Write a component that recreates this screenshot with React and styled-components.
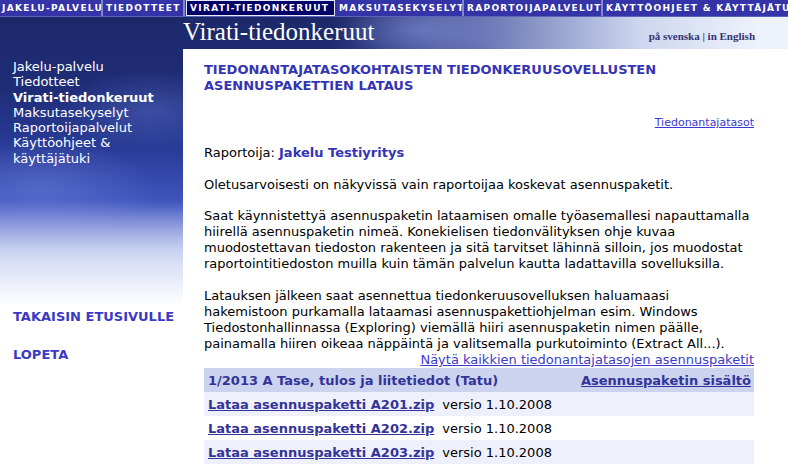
import styled, { createGlobalStyle } from "styled-components";

const GlobalStyle = createGlobalStyle`
  html, body {
    margin: 0;
    padding: 0;
    background: #fff;
  }
  body {
    font-family: "DejaVu Sans", Verdana, sans-serif;
    font-size: 13px;
    color: #000;
  }
`;

const Page = styled.div`
  width: 788px;
  height: 474px;
  overflow: hidden;
  display: flex;
  flex-direction: column;
  background:
    linear-gradient(to bottom, rgba(255,255,255,0) 0, rgba(255,255,255,0) 200px, rgba(235,240,252,0.7) 250px, #fff 305px),
    linear-gradient(to right, rgba(230,236,250,0) 0, rgba(230,236,250,0) 330px, rgba(150,165,225,0.6) 480px, rgba(215,224,246,0.95) 640px, #eef2fb 760px),
    radial-gradient(ellipse 90px 40px at 150px 110px, rgba(90,110,200,0.45), rgba(90,110,200,0) 100%),
    radial-gradient(ellipse 120px 50px at 40px 190px, rgba(110,130,220,0.5), rgba(110,130,220,0) 100%),
    radial-gradient(ellipse 80px 30px at 420px 30px, rgba(120,140,220,0.5), rgba(120,140,220,0) 100%),
    linear-gradient(to bottom, #1b2766 0, #1f2d78 90px, #2a3c98 150px, #4358c2 210px, #8294dc 260px);
`;

const NavBar = styled.nav`
  display: flex;
  height: 16px;
  background: #3434a8;
  border-bottom: 1px solid #5a64b8;
`;

const NavItem = styled.a`
  flex: 0 0 ${(p) => p.$w}px;
  box-sizing: border-box;
  display: flex;
  align-items: center;
  padding-left: ${(p) => (p.$active ? 3 : 2)}px;
  font-family: "DejaVu Sans", Verdana, sans-serif;
  font-weight: bold;
  font-size: 9px;
  letter-spacing: 1.3px;
  color: #fff;
  white-space: nowrap;
  overflow: hidden;
  text-decoration: none;
  background: ${(p) => (p.$active ? "#000066" : "transparent")};
  border: ${(p) => (p.$active ? "1px solid #e8e8ff" : "none")};
  border-right: ${(p) => (p.$active ? "1px solid #e8e8ff" : "2px solid #7f88d6")};
  margin-right: ${(p) => (p.$active ? 2 : 1)}px;
`;

const Banner = styled.header`
  height: 32px;
  display: flex;
  align-items: flex-end;
`;

const BannerTitle = styled.h1`
  margin: 0 0 3px 183px;
  font-family: "Liberation Serif", "Times New Roman", serif;
  font-weight: normal;
  font-size: 25px;
  line-height: 28px;
  color: #fff;
`;

const LangLinks = styled.div`
  margin: 0 33px 7px auto;
  font-family: "Liberation Serif", "Times New Roman", serif;
  font-weight: bold;
  font-size: 11px;
  color: #333370;

  a {
    color: #333370;
    text-decoration: none;
  }
`;

const Body = styled.div`
  flex: 1;
  display: flex;
`;

const Sidebar = styled.aside`
  flex: 0 0 183px;
  box-sizing: border-box;
  padding: 10px 0 0 13px;
`;

const MenuList = styled.ul`
  list-style: none;
  margin: 0;
  padding: 0;
  width: 150px;
`;

const MenuItem = styled.li`
  font-size: 13px;
  line-height: 15.3px;
  color: #fff;
  font-weight: ${(p) => (p.$current ? "bold" : "normal")};
`;

const SideLink = styled.a`
  display: block;
  margin-top: ${(p) => p.$top}px;
  font-weight: bold;
  font-size: 13px;
  line-height: 16px;
  color: #3a3ac4;
  text-decoration: none;
`;

const Main = styled.main`
  flex: 1;
  background: #fff;
  box-sizing: border-box;
  padding: 13px 34px 0 21px;
`;

const Heading = styled.h2`
  margin: 0;
  font-size: 13px;
  line-height: 16px;
  font-weight: bold;
  color: #3434b4;
`;

const RightLink = styled.div`
  text-align: right;
  margin-top: ${(p) => p.$top}px;
  font-size: ${(p) => p.$size}px;
  line-height: ${(p) => p.$lh || 16}px;

  a {
    color: #3b3bcc;
    text-decoration: underline;
  }
`;

const Para = styled.p`
  margin: ${(p) => p.$top}px 0 0 0;
  font-size: 13px;
  line-height: 16px;
  white-space: nowrap;

  strong {
    color: #3434b4;
  }
`;

const PackageHeader = styled.div`
  display: flex;
  justify-content: space-between;
  align-items: center;
  height: 24px;
  margin-top: 1px;
  padding: 0 3px 0 4px;
  background: #ccd3ef;
  font-size: 13px;
  font-weight: bold;
  color: #333399;
  white-space: nowrap;

  a {
    color: #333399;
    text-decoration: underline;
  }
`;

const Table = styled.table`
  width: 100%;
  border-collapse: collapse;
`;

const Row = styled.tr`
  background: ${(p) => (p.$odd ? "#eef1fc" : "#fff")};
  height: 24px;
`;

const Cell = styled.td`
  padding: 0 4px;
  font-size: 13px;
  white-space: nowrap;
  width: ${(p) => p.$w || "auto"};

  a {
    font-weight: bold;
    color: #333399;
    text-decoration: underline;
  }
`;

const navItems = [
  { label: "JAKELU-PALVELU", w: 103 },
  { label: "TIEDOTTEET", w: 81 },
  { label: "VIRATI-TIEDONKERUUT", w: 149, active: true },
  { label: "MAKSUTASEKYSELYT", w: 127 },
  { label: "RAPORTOIJAPALVELUT", w: 138 },
  { label: "KÄYTTÖOHJEET & KÄYTTÄJÄTUKI", w: 200 },
];

const menu = [
  { label: "Jakelu-palvelu" },
  { label: "Tiedotteet" },
  { label: "Virati-tiedonkeruut", current: true },
  { label: "Maksutasekyselyt" },
  { label: "Raportoijapalvelut" },
  { label: "Käyttöohjeet & käyttäjätuki" },
];

const packages = ["A201", "A202", "A203"];

export default function App() {
  return (
    <>
      <GlobalStyle />
      <Page>
        <NavBar>
          {navItems.map((n) => (
            <NavItem key={n.label} href="#" $w={n.w} $active={n.active}>
              {n.label}
            </NavItem>
          ))}
        </NavBar>
        <Banner>
          <BannerTitle>Virati-tiedonkeruut</BannerTitle>
          <LangLinks>
            <a href="#">på svenska</a> | <a href="#">in English</a>
          </LangLinks>
        </Banner>
        <Body>
          <Sidebar>
            <MenuList>
              {menu.map((m) => (
                <MenuItem key={m.label} $current={m.current}>
                  {m.label}
                </MenuItem>
              ))}
            </MenuList>
            <SideLink href="#" $top={143}>
              TAKAISIN ETUSIVULLE
            </SideLink>
            <SideLink href="#" $top={22}>
              LOPETA
            </SideLink>
          </Sidebar>
          <Main>
            <Heading>
              TIEDONANTAJATASOKOHTAISTEN TIEDONKERUUSOVELLUSTEN
              <br />
              ASENNUSPAKETTIEN LATAUS
            </Heading>
            <RightLink $top={21} $size={11}>
              <a href="#">Tiedonantajatasot</a>
            </RightLink>
            <Para $top={14}>
              Raportoija: <strong>Jakelu Testiyritys</strong>
            </Para>
            <Para $top={16}>
              Oletusarvoisesti on näkyvissä vain raportoijaa koskevat asennuspaketit.
            </Para>
            <Para $top={15}>
              Saat käynnistettyä asennuspaketin lataamisen omalle työasemallesi napauttamalla
              <br />
              hiirellä asennuspaketin nimeä. Konekielisen tiedonvälityksen ohje kuvaa
              <br />
              muodostettavan tiedoston rakenteen ja sitä tarvitset lähinnä silloin, jos muodostat
              <br />
              raportointitiedoston muilla kuin tämän palvelun kautta ladattavilla sovelluksilla.
            </Para>
            <Para $top={16}>
              Latauksen jälkeen saat asennettua tiedonkeruusovelluksen haluamaasi
              <br />
              hakemistoon purkamalla lataamasi asennuspakettiohjelman esim. Windows
              <br />
              Tiedostonhallinnassa (Exploring) viemällä hiiri asennuspaketin nimen päälle,
              <br />
              painamalla hiiren oikeaa näppäintä ja valitsemalla purkutoiminto (Extract All...).
            </Para>
            <RightLink $top={0} $size={13} $lh={15}>
              <a href="#">Näytä kaikkien tiedonantajatasojen asennuspaketit</a>
            </RightLink>
            <PackageHeader>
              <span>1/2013 A Tase, tulos ja liitetiedot (Tatu)</span>
              <a href="#">Asennuspaketin sisältö</a>
            </PackageHeader>
            <Table>
              <tbody>
                {packages.map((p, i) => (
                  <Row key={p} $odd={i % 2 === 0}>
                    <Cell $w="1%">
                      <a href="#">Lataa asennuspaketti {p}.zip</a>
                    </Cell>
                    <Cell>versio 1.10.2008</Cell>
                  </Row>
                ))}
              </tbody>
            </Table>
          </Main>
        </Body>
      </Page>
    </>
  );
}
